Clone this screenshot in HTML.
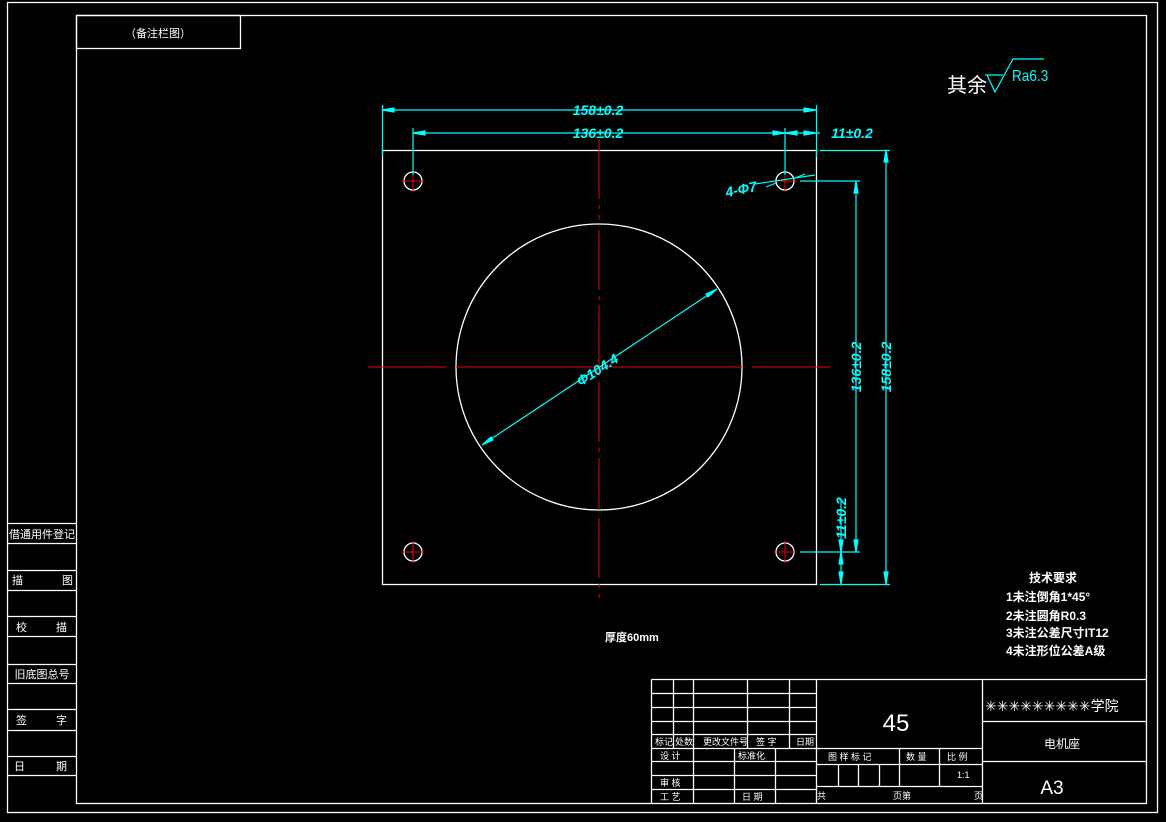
<!DOCTYPE html>
<html><head><meta charset="utf-8"><style>
html,body{margin:0;padding:0;background:#000;overflow:hidden}
svg{display:block}
text{font-family:"Liberation Sans","Noto Sans CJK SC",sans-serif}
</style></head><body>
<svg width="1166" height="822" viewBox="0 0 1166 822" xmlns="http://www.w3.org/2000/svg">
<rect width="1166" height="822" fill="#000"/>
<g stroke="#fff" stroke-width="1.3" fill="none">
<rect x="7.5" y="2.5" width="1150" height="810"/>
<rect x="76.5" y="15.5" width="1070" height="788"/>
<rect x="76.5" y="15.5" width="164" height="33"/>
<path d="M7.5 523.5H76.5M7.5 543.5H76.5M7.5 570.5H76.5M7.5 590.5H76.5M7.5 616.5H76.5M7.5 636.5H76.5M7.5 664.5H76.5M7.5 683.5H76.5M7.5 709.5H76.5M7.5 730.5H76.5M7.5 756.5H76.5M7.5 775.5H76.5"/>
<path d="M651.5 679.5H1146.5M651.5 679.5V803.5"/>
<path d="M651.5 693.5H816.5M651.5 707.5H816.5M651.5 721.5H816.5M651.5 734.5H816.5M651.5 748.5H982.5M651.5 761.5H816.5M651.5 775.5H816.5M651.5 789.5H816.5"/>
<path d="M673.5 679.5V748.5M693.5 679.5V803.5M747.5 679.5V748.5M789.5 679.5V748.5M734.5 748.5V803.5M775.5 748.5V803.5M816.5 679.5V803.5"/>
<path d="M816.5 764.5H982.5M816.5 786.5H982.5M899.5 748.5V786.5M939.5 748.5V786.5M838.5 764.5V786.5M858.5 764.5V786.5M879.5 764.5V786.5"/>
<path d="M982.5 679.5V803.5M982.5 721.5H1146.5M982.5 761.5H1146.5"/>
<rect x="382.5" y="150.5" width="434" height="434"/>
<circle cx="599" cy="367" r="143"/>
<circle cx="413" cy="181" r="9"/><circle cx="785" cy="181" r="9"/>
<circle cx="413" cy="552" r="9"/><circle cx="785" cy="552" r="9"/>
</g>
<g stroke="#e00" stroke-width="1" fill="none">
<path d="M368 367H446M456 367H742M752 367H830" />
<path d="M599 139V220M599 230V508M599 518V598" stroke-dasharray="60 6 4 6"/>
<path d="M402 181H424M413 170V192M774 181H796M785 170V192M402 552H424M413 541V563M774 552H796M785 541V563"/>
</g>
<g stroke="#0ff" stroke-width="1.2" fill="#0ff">
<path d="M382.5 105V157M816.5 105V157M413 128V175M785 128V175" fill="none"/>
<path d="M382 110H816M413 133H785M785 133H820M816 133H820" fill="none"/>
<path d="M382 110l12-2v4zM816 110l-12-2v4zM413 133l12-2v4zM785 133l-12-2v4zM785 133l12-2v4zM816 133l-12-2v4z"/>
<path d="M820 150.5H890M800 181H860M800 552H860M820 584.5H890M886 150V584M856 181V552M841 500V584" fill="none"/>
<path d="M886 150l-2 12h4zM886 584l-2-12h4zM856 181l-2 12h4zM856 552l-2-12h4zM841 552l-2-12h4zM841 584l-2-12h4zM841 552l-2 12h4z"/>
<path d="M482 445L717 289" fill="none"/>
<path d="M482 445l9-8 2 3zM717 289l-9 8-2-3z"/>
<path d="M755 184L815 175" fill="none"/>
<path d="M776 183l-10 4zM795 178l10-4z"/>
<path d="M985 75H1003M987 75l8 17 18-33h31" fill="none"/>
</g>
<g fill="#0ff" font-size="14" font-weight="bold" font-style="italic">
<text x="598" y="115" text-anchor="middle">158±0.2</text>
<text x="598" y="138" text-anchor="middle">136±0.2</text>
<text x="852" y="138" text-anchor="middle">11±0.2</text>
<text transform="translate(891 367) rotate(-90)" text-anchor="middle">158±0.2</text>
<text transform="translate(861 367) rotate(-90)" text-anchor="middle">136±0.2</text>
<text transform="translate(846 518) rotate(-90)" text-anchor="middle">11±0.2</text>
<text transform="translate(600 374) rotate(-33)" text-anchor="middle">Φ104.4</text>
<text transform="translate(742 194) rotate(-12)" text-anchor="middle">4-Φ7</text>
<text x="1012" y="81" font-style="normal" font-weight="normal" font-size="16" transform="translate(1012 0) scale(0.85 1) translate(-1012 0)">Ra6.3</text>
</g>
<g fill="#fff" font-size="11">
<text x="158" y="37" text-anchor="middle">（备注栏图）</text>
<text x="947" y="92" font-size="20">其余</text>
<text x="42" y="538" text-anchor="middle">借通用件登记</text>
<text x="12" y="584">描</text><text x="62" y="584">图</text>
<text x="16" y="631">校</text><text x="56" y="631">描</text>
<text x="42" y="678" text-anchor="middle">旧底图总号</text>
<text x="16" y="724">签</text><text x="56" y="724">字</text>
<text x="14" y="770">日</text><text x="56" y="770">期</text>
<text x="605" y="641" font-weight="bold">厚度60mm</text>
<g font-weight="bold" font-size="12">
<text x="1029" y="582">技术要求</text>
<text x="1006" y="601">1未注倒角1*45°</text>
<text x="1006" y="620">2未注圆角R0.3</text>
<text x="1006" y="637">3未注公差尺寸IT12</text>
<text x="1006" y="655">4未注形位公差A级</text>
</g>
<g font-size="9">
<text x="655" y="745">标记</text><text x="675" y="745">处数</text><text x="703" y="745">更改文件号</text><text x="756" y="745">签 字</text><text x="796" y="745">日期</text>
<text x="660" y="759">设 计</text><text x="738" y="759">标准化</text>
<text x="660" y="786">审 核</text>
<text x="660" y="800">工 艺</text><text x="742" y="800">日 期</text>
<text x="828" y="760">图 样 标 记</text><text x="906" y="760">数 量</text><text x="947" y="760">比 例</text>
<text x="957" y="778">1:1</text>
<text x="817" y="799">共</text><text x="893" y="799">页第</text><text x="974" y="799">页</text>
</g>
<text x="896" y="731" text-anchor="middle" font-size="24" font-weight="300">45</text>
<text x="985" y="711" font-size="14">✳✳✳✳✳✳✳✳✳学院</text>
<text x="1062" y="748" text-anchor="middle" font-size="12">电机座</text>
<text x="1052" y="794" text-anchor="middle" font-size="19">A3</text>
</g>
</svg>
</body></html>
